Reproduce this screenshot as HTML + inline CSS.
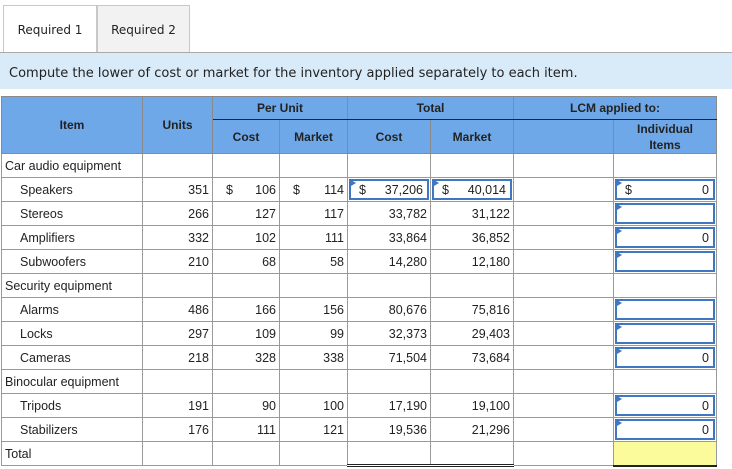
<!DOCTYPE html>
<html><head><style>
body{margin:0;background:#fff;font-family:"Liberation Sans",Arial,sans-serif;font-size:12px;color:#222;width:732px;height:469px;overflow:hidden;position:relative}
.tab{position:absolute;top:5px;height:47px;border:1px solid #c8c8c8;border-bottom:none;font-family:"DejaVu Sans",Verdana,sans-serif;font-size:12px;line-height:48px;text-align:center;color:#222}
.line{position:absolute;top:52px;left:0;width:732px;height:1px;background:#aaa}
.band{position:absolute;top:53px;left:0;width:732px;height:36px;background:#d9ebf9;font-family:"DejaVu Sans",Verdana,sans-serif;font-size:13px;line-height:42px;padding-left:9px;box-sizing:border-box;color:#222}
table{position:absolute;top:96px;left:1px;border-collapse:collapse;table-layout:fixed}
td{border:1px solid #9a9a9a;height:24px;padding:0 3px;box-sizing:border-box;text-align:right;position:relative;white-space:nowrap;font-family:"Liberation Sans",Arial,sans-serif;font-size:12.5px}
tr.r{height:24px}
th{background:#6fa8e8;border:1px solid #8a8a8a;font-weight:bold;font-size:12px;color:#222;padding:0}
th.bb{border-bottom:1px solid #222}
td.l{text-align:left}
td.i{padding-left:18px;text-align:left}
.d2{float:left;padding-left:5px}
.in{position:absolute;left:1px;top:1px;right:1px;bottom:1px;border:2px solid #3f78c0;text-align:right;line-height:19px;padding-right:4px}
.in:before{content:"";position:absolute;left:0;top:0;border-left:5px solid #3f78c0;border-top:3px solid transparent;border-bottom:3px solid transparent;top:-1px}
.in .d2{padding-left:8px}
td.y{background:#fbfb9c;border-bottom:2px solid #222}
td.dbl{border-bottom:3px double #222}
</style></head><body>
<div class="tab" style="left:3px;width:92px;background:#fff;height:48px">Required 1</div>
<div class="tab" style="left:97px;width:91px;background:#f2f2f2">Required 2</div>
<div class="line"></div>
<div class="band">Compute the lower of cost or market for the inventory applied separately to each item.</div>
<table>
<colgroup><col style="width:141px"><col style="width:70px"><col style="width:67px"><col style="width:68px"><col style="width:83px"><col style="width:83px"><col style="width:100px"><col style="width:103px"></colgroup>
<tr style="height:23px"><th rowspan="2">Item</th><th rowspan="2">Units</th><th colspan="2" class="bb">Per Unit</th><th colspan="2" class="bb">Total</th><th colspan="2" class="bb">LCM applied to:</th></tr>
<tr style="height:34px"><th>Cost</th><th>Market</th><th>Cost</th><th>Market</th><th></th><th style="line-height:16px">Individual<br>Items</th></tr>
<tr class="r"><td class="l">Car audio equipment</td><td></td><td></td><td></td><td></td><td></td><td></td><td></td></tr>
<tr class="r"><td class="i">Speakers</td><td>351</td><td><span class="d2" style="padding-left:10px">$</span>106</td><td><span class="d2" style="padding-left:10px">$</span>114</td><td><div class="in"><span class="d2">$</span>37,206</div></td><td><div class="in"><span class="d2">$</span>40,014</div></td><td></td><td><div class="in"><span class="d2">$</span>0</div></td></tr>
<tr class="r"><td class="i">Stereos</td><td>266</td><td>127</td><td>117</td><td>33,782</td><td>31,122</td><td></td><td><div class="in"></div></td></tr>
<tr class="r"><td class="i">Amplifiers</td><td>332</td><td>102</td><td>111</td><td>33,864</td><td>36,852</td><td></td><td><div class="in">0</div></td></tr>
<tr class="r"><td class="i">Subwoofers</td><td>210</td><td>68</td><td>58</td><td>14,280</td><td>12,180</td><td></td><td><div class="in"></div></td></tr>
<tr class="r"><td class="l">Security equipment</td><td></td><td></td><td></td><td></td><td></td><td></td><td></td></tr>
<tr class="r"><td class="i">Alarms</td><td>486</td><td>166</td><td>156</td><td>80,676</td><td>75,816</td><td></td><td><div class="in"></div></td></tr>
<tr class="r"><td class="i">Locks</td><td>297</td><td>109</td><td>99</td><td>32,373</td><td>29,403</td><td></td><td><div class="in"></div></td></tr>
<tr class="r"><td class="i">Cameras</td><td>218</td><td>328</td><td>338</td><td>71,504</td><td>73,684</td><td></td><td><div class="in">0</div></td></tr>
<tr class="r"><td class="l">Binocular equipment</td><td></td><td></td><td></td><td></td><td></td><td></td><td></td></tr>
<tr class="r"><td class="i">Tripods</td><td>191</td><td>90</td><td>100</td><td>17,190</td><td>19,100</td><td></td><td><div class="in">0</div></td></tr>
<tr class="r"><td class="i">Stabilizers</td><td>176</td><td>111</td><td>121</td><td>19,536</td><td>21,296</td><td></td><td><div class="in">0</div></td></tr>
<tr class="r"><td class="l">Total</td><td></td><td></td><td></td><td class="dbl"></td><td class="dbl"></td><td></td><td class="y"></td></tr>
</table>
</body></html>
